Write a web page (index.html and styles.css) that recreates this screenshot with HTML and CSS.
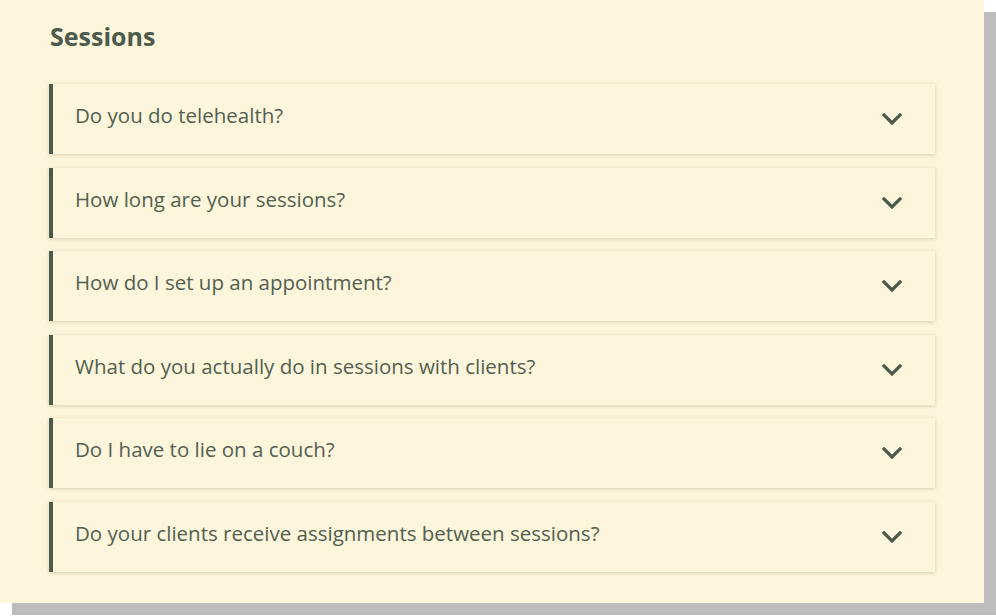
FILE: index.html
```html
<!DOCTYPE html>
<html lang="en">
<head>
<meta charset="utf-8">
<title>Sessions FAQ</title>
<link rel="stylesheet" href="styles.css">
</head>
<body>
<section class="card">
  <h2 class="title">Sessions</h2>
  <div class="list">
    <div class="item"><span class="q">Do you do telehealth?</span><svg class="chev" viewBox="0 0 20 12"><path d="M2 2 L10 10 L18 2" /></svg></div>
    <div class="item"><span class="q">How long are your sessions?</span><svg class="chev" viewBox="0 0 20 12"><path d="M2 2 L10 10 L18 2" /></svg></div>
    <div class="item"><span class="q">How do I set up an appointment?</span><svg class="chev" viewBox="0 0 20 12"><path d="M2 2 L10 10 L18 2" /></svg></div>
    <div class="item"><span class="q">What do you actually do in sessions with clients?</span><svg class="chev" viewBox="0 0 20 12"><path d="M2 2 L10 10 L18 2" /></svg></div>
    <div class="item"><span class="q">Do I have to lie on a couch?</span><svg class="chev" viewBox="0 0 20 12"><path d="M2 2 L10 10 L18 2" /></svg></div>
    <div class="item"><span class="q">Do your clients receive assignments between sessions?</span><svg class="chev" viewBox="0 0 20 12"><path d="M2 2 L10 10 L18 2" /></svg></div>
  </div>
</section>
</body>
</html>
```
FILE: styles.css
```css
html, body {
  margin: 0;
  padding: 0;
  background: #ffffff;
}
body {
  font-family: "Open Sans", "Noto Sans", sans-serif;
  color: #4b5a4b;
  min-height: 616px;
}
.card {
  box-sizing: border-box;
  width: 984px;
  height: 603px;
  background: #fdf5dc;
  box-shadow: 12px 12px 0 #bdbdbd;
  padding: 18px 49px 31px 49px;
}
.title {
  margin: 0 0 0 1px;
  font-size: 25px;
  font-weight: 700;
  line-height: 36px;
  color: #4b5a4b;
}
.list {
  margin-top: 30px;
  display: flex;
  flex-direction: column;
  gap: 13.6px;
}
.item {
  box-sizing: border-box;
  height: 70px;
  display: flex;
  align-items: center;
  justify-content: space-between;
  border-left: 4px solid #4b5a4b;
  background: #fdf5dc;
  box-shadow: 0 1px 4px rgba(80, 70, 30, 0.22);
  padding: 0 33px 0 22px;
}
.q {
  font-size: 20.5px;
  line-height: 24px;
  margin-bottom: 8px;
  color: #52604f;
}
.chev {
  width: 20px;
  height: 12px;
  fill: none;
  stroke: #4b5a4b;
  stroke-width: 3.2;
  stroke-linecap: square;
}
```
